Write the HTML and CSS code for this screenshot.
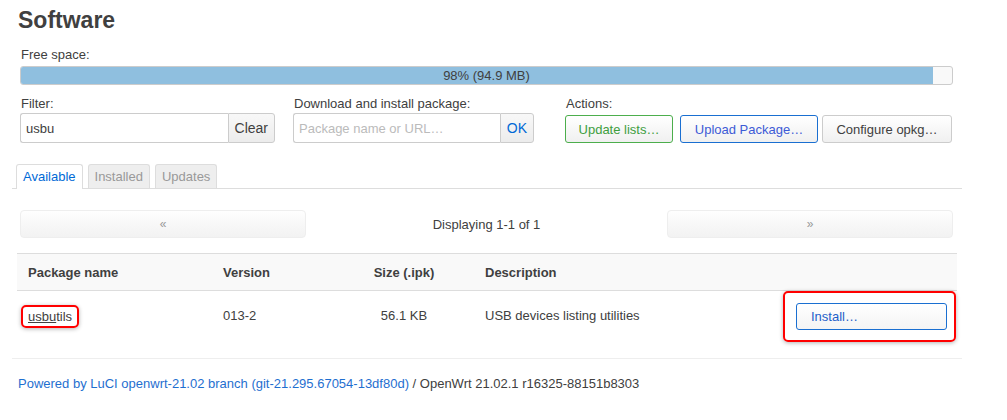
FILE: index.html
```html
<!DOCTYPE html>
<html>
<head>
<meta charset="utf-8">
<link rel="stylesheet" href="styles.css">
</head>
<body>
<div class="page">
  <h2 class="title">Software</h2>

  <div class="section">
    <div class="label">Free space:</div>
    <div class="progress">
      <div class="progress-fill" style="width:98%"></div>
      <div class="progress-text">98% (94.9 MB)</div>
    </div>
  </div>

  <div class="controls">
    <div class="ctl ctl-filter">
      <div class="label">Filter:</div>
      <div class="group">
        <input class="inp" type="text" value="usbu">
        <button class="gbtn">Clear</button>
      </div>
    </div>
    <div class="ctl ctl-dl">
      <div class="label">Download and install package:</div>
      <div class="group">
        <input class="inp" type="text" placeholder="Package name or URL…">
        <button class="gbtn gbtn-ok">OK</button>
      </div>
    </div>
    <div class="ctl ctl-actions">
      <div class="label">Actions:</div>
      <div class="actions">
        <button class="btn btn-green w-update">Update lists…</button>
        <button class="btn btn-blue w-upload">Upload Package…</button>
        <button class="btn btn-grey w-conf">Configure opkg…</button>
      </div>
    </div>
  </div>

  <div class="tabs">
    <div class="tab active">Available</div>
    <div class="tab">Installed</div>
    <div class="tab">Updates</div>
  </div>

  <div class="pager">
    <div class="pbtn">«</div>
    <div class="pinfo">Displaying 1-1 of 1</div>
    <div class="pbtn">»</div>
  </div>

  <div class="table">
    <div class="tr thead">
      <div class="td c1">Package name</div>
      <div class="td c2">Version</div>
      <div class="td c3">Size (.ipk)</div>
      <div class="td c4">Description</div>
      <div class="td c5"></div>
    </div>
    <div class="tr trow">
      <div class="td c1"><span class="hl-name"><u>usbu</u>tils</span></div>
      <div class="td c2">013-2</div>
      <div class="td c3">56.1 KB</div>
      <div class="td c4">USB devices listing utilities</div>
      <div class="td c5"><span class="hl-btn"><button class="btn btn-blue btn-install">Install…</button></span></div>
    </div>
  </div>

  <div class="footer">
    <a class="flink">Powered by LuCI openwrt-21.02 branch (git-21.295.67054-13df80d)</a> / OpenWrt 21.02.1 r16325-88151b8303
  </div>
</div>
</body>
</html>
```

FILE: styles.css
```css
html, body {
  margin: 0;
  padding: 0;
  background: #fff;
}
body {
  font-family: "Liberation Sans", Arial, sans-serif;
  font-size: 13px;
  color: #404040;
}
.page {
  width: 950px;
  margin-left: 12px;
  display: flex;
  flex-direction: column;
}
.title {
  margin: 0;
  padding: 7px 0 0 6px;
  font-size: 23px;
  line-height: 27px;
  font-weight: bold;
  color: #404040;
}
.section {
  padding: 0 8px 0 8px;
  margin-top: 13px;
}
.label {
  line-height: 15px;
  height: 15px;
  color: #404040;
  padding-left: 1px;
}
.progress {
  position: relative;
  margin-top: 4px;
  height: 17px;
  border: 1px solid #ccc;
  border-radius: 3px;
  background: #f9f9f9;
  overflow: hidden;
  width: 931px;
}
.progress-fill {
  height: 100%;
  background: #8fbfdf;
}
.progress-text {
  position: absolute;
  left: 0; right: 0; top: 0;
  text-align: center;
  line-height: 17px;
  color: #404040;
}
.controls {
  display: flex;
  padding-left: 8px;
  margin-top: 11px;
}
.ctl-filter { width: 255px; margin-right: 18px; }
.ctl-dl { width: 241px; margin-right: 31px; }
.ctl .label { margin-bottom: 2px; }
.group {
  display: flex;
  height: 30px;
}
.inp {
  box-sizing: border-box;
  flex: 1;
  min-width: 0;
  height: 30px;
  margin: 0;
  padding: 0 5px;
  border: 1px solid #ccc;
  border-right: none;
  border-radius: 3px 0 0 3px;
  font-family: "Liberation Sans", Arial, sans-serif;
  font-size: 13px;
  color: #404040;
  background: #fff;
  outline: none;
}
.inp::placeholder { color: #bbb; }
.gbtn {
  box-sizing: border-box;
  height: 30px;
  margin: 0;
  padding: 0 6px;
  border: 1px solid #ccc;
  border-radius: 0 3px 3px 0;
  background: linear-gradient(#f8f8f8, #ececec);
  font-family: "Liberation Sans", Arial, sans-serif;
  font-size: 14px;
  color: #404040;
}
.gbtn-ok { color: #0069d6; padding: 0 6px; }
.actions {
  display: flex;
  align-items: flex-end;
  height: 30px;
}
.btn {
  box-sizing: border-box;
  height: 28px;
  margin: 0;
  padding: 0 10px;
  border: 1px solid #ccc;
  border-radius: 3px;
  background: linear-gradient(#ffffff, #f0f0f0);
  font-family: "Liberation Sans", Arial, sans-serif;
  font-size: 13px;
  color: #404040;
}
.btn-green { border-color: #4cae4c; color: #3e9e3e; }
.btn-blue { border-color: #1a6fd1; color: #3d5bd6; }
.btn-grey { border-color: #ccc; color: #404040; }
.w-update { width: 108px; margin-right: 7px; }
.w-upload { width: 138px; margin-right: 4px; }
.w-conf { width: 130px; }

.tabs {
  display: flex;
  margin-top: 21px;
  padding-left: 4px;
  border-bottom: 1px solid #ddd;
  height: 24px;
}
.tab {
  box-sizing: border-box;
  height: 24px;
  line-height: 23px;
  padding: 0 6px;
  margin-right: 5px;
  border: 1px solid #ddd;
  border-bottom: none;
  border-radius: 3px 3px 0 0;
  background: #eee;
  color: #999;
  font-size: 13px;
}
.tab.active {
  background: #fff;
  color: #0069d6;
  height: 25px;
}
.pager {
  display: flex;
  align-items: center;
  padding: 0 9px 0 8px;
  margin-top: 21px;
}
.pbtn {
  box-sizing: border-box;
  width: 286px;
  height: 28px;
  line-height: 26px;
  text-align: center;
  border: 1px solid #eee;
  border-radius: 4px;
  background: linear-gradient(#fefefe, #f2f2f2);
  color: #999;
  font-size: 12px;
}
.pinfo {
  flex: 1;
  text-align: center;
  color: #404040;
}
.table {
  margin: 15px 5px 0 5px;
  width: 940px;
}
.tr {
  display: grid;
  grid-template-columns: 195px 128px 128px 1fr 180px;
  align-items: center;
}
.thead {
  height: 36px;
  background: #f9f9f9;
  border-top: 1px solid #ddd;
  border-bottom: 1px solid #ddd;
  font-weight: bold;
  color: #404040;
}
.trow {
  height: 51px;
  align-items: start;
}
.trow .td { padding-top: 17px; }
.trow .c5 { padding-top: 0; }
.td { padding-left: 11px; white-space: nowrap; }
.c3 { padding-left: 0; text-align: center; }
.c4 { padding-left: 17px; }
.c5 { padding-left: 6px; }
.hl-name {
  display: inline-block;
  margin-left: -7px;
  margin-top: -3px;
  padding: 2px 5px;
  border: 2px solid #f00;
  border-radius: 5px;
  box-shadow: 0 1px 4px rgba(0,0,0,0.3);
  color: #404040;
}
.hl-name u { text-decoration: underline; }
.hl-btn {
  display: inline-block;
  padding: 10px 7px 10px 11px;
  border: 2px solid #f00;
  border-radius: 5px;
  box-shadow: 0 1px 4px rgba(0,0,0,0.3);
}
.btn-install {
  width: 151px;
  height: 27px;
  text-align: left;
  padding-left: 14px;
  background: linear-gradient(#ffffff, #f4f4f4);
  color: #1e5fc9;
}
.footer {
  margin-top: 16px;
  border-top: 1px solid #eee;
  padding: 16px 0 0 6px;
  line-height: 18px;
  font-size: 13px;
  color: #404040;
}
.flink { color: #1f6fd0; }
```
